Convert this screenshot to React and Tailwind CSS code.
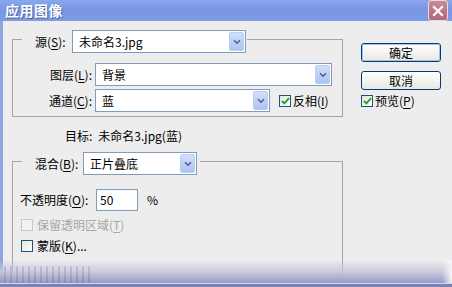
import React from "react";

const FONT = { fontFamily: '"Noto Sans CJK SC", "Noto Sans", sans-serif' };

function U({ children }) {
  return <span className="underline underline-offset-[2px]">{children}</span>;
}

function Select({ className, value }) {
  return (
    <div className={"h-[23px] border border-[#7f9db9] bg-white flex items-center " + className}>
      <span className="flex-1 pl-[6px] text-[12px] leading-none text-black whitespace-nowrap">{value}</span>
      <div className="w-[15px] h-[19px] mr-[1px] rounded-[2px] border border-[#bccdf4] bg-gradient-to-b from-[#d2defc] to-[#adc3f3] flex items-center justify-center">
        <svg width="8" height="6" viewBox="0 0 8 6">
          <path d="M1 1.2 L4 4.2 L7 1.2" fill="none" stroke="#4d6185" strokeWidth="1.6" />
        </svg>
      </div>
    </div>
  );
}

function Check({ checked, disabled }) {
  return (
    <div
      className={
        "w-[12px] h-[12px] border flex items-center justify-center " +
        (disabled ? "border-[#c8c8c4] bg-[#f2f2f0]" : "border-[#1c5180] bg-gradient-to-br from-[#e4e4de] to-white")
      }
    >
      {checked && (
        <svg width="9" height="8" viewBox="0 0 9 8">
          <path d="M1 4 L3.4 6.4 L8 1.2" fill="none" stroke="#21a121" strokeWidth="1.8" />
        </svg>
      )}
    </div>
  );
}

function Button({ children, primary }) {
  return (
    <div className="w-[80px] h-[19px] rounded-[3px] border border-[#003c74] bg-gradient-to-b from-white to-[#e8e8e0] flex items-center justify-center">
      <div
        className={
          "w-full h-full rounded-[2px] flex items-center justify-center text-[12px] leading-none text-black " +
          (primary ? "border border-[#a8c0ec]" : "")
        }
      >
        {children}
      </div>
    </div>
  );
}

export default function App() {
  return (
    <div className="w-[452px] h-[287px] relative overflow-hidden flex flex-col bg-[#ededed]" style={FONT}>
      {/* Title bar */}
      <div className="h-[29px] flex items-center justify-between pl-[5px] pr-[4px] bg-gradient-to-b from-[#8aa8ec] via-[#7896e2] to-[#7f9de6]">
        <span className="text-white text-[14px] font-bold tracking-[0.5px] [text-shadow:1px_1px_0_#4a62a8]">应用图像</span>
        <div className="w-[20px] h-[21px] rounded-[3px] border border-[#e8d8e8] bg-gradient-to-b from-[#c88a98] to-[#b06878] flex items-center justify-center">
          <svg width="12" height="12" viewBox="0 0 12 12">
            <path d="M2 2 L10 10 M10 2 L2 10" stroke="white" strokeWidth="2.2" strokeLinecap="square" />
          </svg>
        </div>
      </div>

      {/* Body */}
      <div className="flex-1 flex border-l-[3px] border-[#8ea6e0] text-[12px] text-black">
        {/* Left column */}
        <div className="w-[340px] flex flex-col">
          {/* Group 1 */}
          <div className="mt-[18px] ml-[9px] w-[331px] border border-[#a4a4a0] flex flex-col pb-[4px]">
            <div className="-mt-[10px] ml-[9px] w-fit bg-[#ededed] pl-[13px] pr-[1px] flex items-center">
              <span className="w-[37px] whitespace-nowrap">源(<U>S</U>):</span>
              <Select className="w-[174px]" value="未命名3.jpg" />
            </div>
            <div className="mt-[10px] flex items-center">
              <span className="w-[80px] text-right pr-[1px] whitespace-nowrap">图层(<U>L</U>):</span>
              <Select className="ml-[2px] w-[237px]" value="背景" />
            </div>
            <div className="mt-[3px] flex items-center">
              <span className="w-[80px] text-right pr-[1px] whitespace-nowrap">通道(<U>C</U>):</span>
              <Select className="ml-[2px] w-[175px]" value="蓝" />
              <div className="ml-[9px] flex items-center gap-[2px]">
                <Check checked />
                <span className="whitespace-nowrap">反相(<U>I</U>)</span>
              </div>
            </div>
          </div>

          {/* Target */}
          <div className="mt-[11px] ml-[62px] h-[16px] flex items-center whitespace-nowrap">
            <span>目标:</span>
            <span className="ml-[6px]">未命名3.jpg(蓝)</span>
          </div>

          {/* Group 2 */}
          <div className="mt-[17px] ml-[9px] w-[331px] h-[140px] border border-[#a4a4a0] flex flex-col">
            <div className="-mt-[10px] ml-[9px] w-fit bg-[#ededed] pl-[13px] pr-[3px] flex items-center">
              <span className="w-[48px] whitespace-nowrap">混合(<U>B</U>):</span>
              <Select className="w-[114px]" value="正片叠底" />
            </div>
            <div className="mt-[14px] pl-[7px] flex items-center">
              <span className="w-[76px] whitespace-nowrap">不透明度(<U>O</U>):</span>
              <div className="w-[42px] h-[22px] border border-[#7f9db9] bg-white flex items-center pl-[3px]">50</div>
              <span className="ml-[9px]">%</span>
            </div>
            <div className="mt-[6px] pl-[8px] h-[16px] flex items-center gap-[4px] text-[#a8a8a4]">
              <Check disabled />
              <span className="whitespace-nowrap">保留透明区域(<U>T</U>)</span>
            </div>
            <div className="mt-[5px] pl-[8px] h-[16px] flex items-center gap-[4px]">
              <Check />
              <span className="whitespace-nowrap">蒙版(<U>K</U>)...</span>
            </div>
          </div>
        </div>

        {/* Right column */}
        <div className="ml-[18px] mt-[22px] flex flex-col">
          <Button primary>确定</Button>
          <div className="mt-[9px]">
            <Button>取消</Button>
          </div>
          <div className="mt-[3px] h-[16px] flex items-center gap-[2px]">
            <Check checked />
            <span className="whitespace-nowrap">预览(<U>P</U>)</span>
          </div>
        </div>
      </div>

      {/* Bottom fade over content */}
      <div className="absolute left-0 right-0 bottom-0 flex flex-col pointer-events-none">
        <div className="h-[23px] relative bg-gradient-to-b from-[#ededed]/0 via-[#c6c8dc]/90 to-[#959bc4]">
          <div className="absolute left-[0px] top-[6px] bottom-0 w-[90px] bg-[repeating-linear-gradient(90deg,transparent_0,transparent_4px,rgba(70,70,120,0.18)_4px,rgba(70,70,120,0.18)_6px)]"></div>
          <div className="absolute right-0 top-0 bottom-0 w-[10px] bg-gradient-to-r from-[#ededed]/0 to-[#f4f4f8]"></div>
        </div>
        <div className="h-[1px] bg-[#d4d8ee]"></div>
        <div className="h-[3px] bg-[#7a82b6]"></div>
      </div>
    </div>
  );
}
